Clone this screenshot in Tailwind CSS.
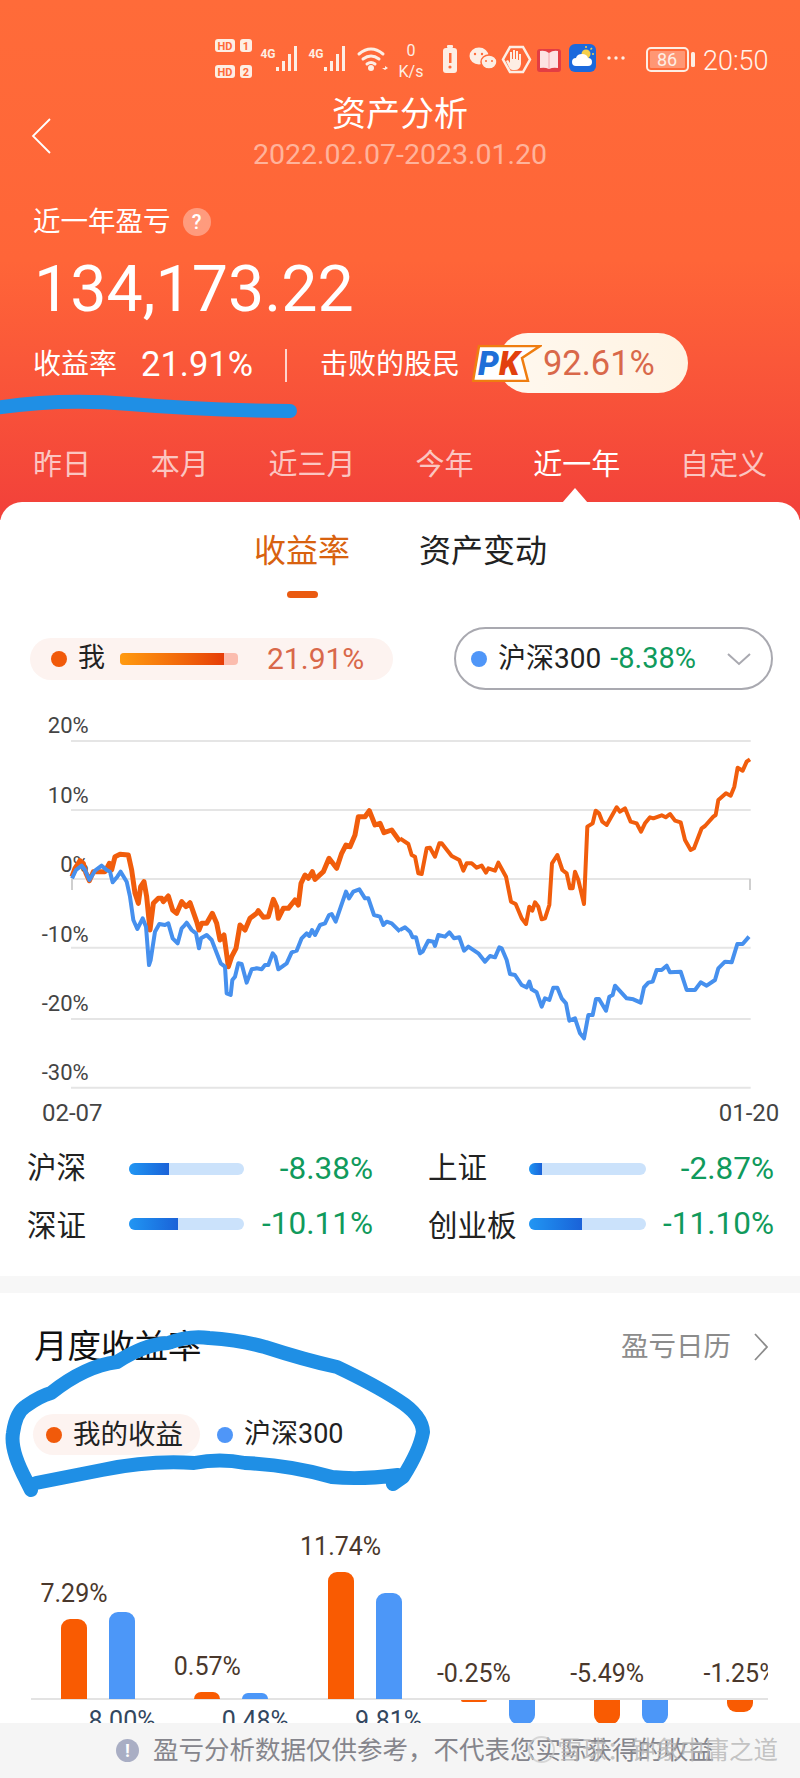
<!DOCTYPE html>
<html lang="zh-CN">
<head>
  <meta charset="UTF-8">
  <title>资产分析</title>
  <script src="https://cdn.jsdelivr.net/npm/@tailwindcss/browser@4"></script>
</head>
<body class="bg-white">
<div class="relative w-[800px] h-[1778px] overflow-hidden flex flex-col bg-white text-[#222] [font-family:Roboto,'Noto_Sans_CJK_SC',sans-serif]">

  <!-- header -->
  <div class="relative h-[520px] shrink-0 bg-linear-to-b from-[#ff6b39] via-[#ff6538] to-[#f2403a] text-white">
    <div class="flex pt-[36px] pl-[210px] h-[82px]">
      <svg class="w-[490px] h-[46px] shrink-0" viewBox="210 36 490 46">
        <g fill="#fdeee4" font-weight="700" text-anchor="middle">
          <rect x="215" y="39" width="20" height="13" rx="3"/><rect x="240" y="39" width="12" height="13" rx="3"/>
          <rect x="215" y="65" width="20" height="13" rx="3"/><rect x="240" y="65" width="12" height="13" rx="3"/>
          <text x="225" y="50" font-size="11" fill="#ff6b39">HD</text><text x="246" y="50" font-size="11" fill="#ff6b39">1</text>
          <text x="225" y="76" font-size="11" fill="#ff6b39">HD</text><text x="246" y="76" font-size="11" fill="#ff6b39">2</text>
          <text x="268" y="58" font-size="12">4G</text><text x="316" y="58" font-size="12">4G</text>
          <rect x="276" y="67" width="3" height="4"/><rect x="282" y="61" width="3" height="10"/><rect x="288" y="54" width="3" height="17"/><rect x="294" y="46" width="3" height="25"/>
          <rect x="324" y="67" width="3" height="4"/><rect x="330" y="61" width="3" height="10"/><rect x="336" y="54" width="3" height="17"/><rect x="342" y="46" width="3" height="25"/>
          <circle cx="371" cy="68" r="3"/>
          <path d="M359 54q12-10 24 0M363 59q8-6 16 0M367 64q4-3 8 0" fill="none" stroke="#fdeee4" stroke-width="3" stroke-linecap="round"/>
          <path d="M382 68h3l-0-2 3 2-3 2z"/>
        </g>
        <g fill="#fdeee4" text-anchor="middle">
          <text x="411" y="56" font-size="16">0</text>
          <text x="411" y="77" font-size="16">K/s</text>
          <rect x="447" y="45" width="6" height="3" rx="1"/>
          <rect x="443" y="48" width="14" height="25" rx="3"/>
          <rect x="449" y="53" width="2.5" height="10" fill="#ff6b39"/><circle cx="450" cy="67" r="1.6" fill="#ff6b39"/>
          <ellipse cx="479" cy="56" rx="9.5" ry="8.5"/>
          <ellipse cx="489" cy="62" rx="8" ry="7" stroke="#ff6b39" stroke-width="1.5"/>
          <circle cx="475" cy="54" r="1.2" fill="#ff6b39"/><circle cx="482" cy="54" r="1.2" fill="#ff6b39"/>
          <circle cx="486" cy="61" r="1" fill="#ff6b39"/><circle cx="492" cy="61" r="1" fill="#ff6b39"/>
          <path d="M510 47h13l7 12.500-7 12.500h-13l-7-12.500z" fill="none" stroke="#fdeee4" stroke-width="2.500"/>
          <path d="M510 52h2v7h1v-9h2v9h1v-8h2v9h1v-6h2v10q-1 6-6 6h-2q-3 0-4-3l-3-6 2-1 2 3z"/>
        </g>
        <rect x="537" y="49" width="24" height="23" rx="3" fill="#e33d43"/>
        <path d="M540 51q5-1 9 2 4-3 9-2v17q-5-1-9 1-4-2-9-1z" fill="#fde3e3"/>
        <path d="M549 53v16" stroke="#f4a6ad" stroke-width="1"/>
        <rect x="569" y="44" width="27" height="28" rx="6" fill="#1b69dd"/>
        <circle cx="586" cy="54" r="4.500" fill="#f4cf4a"/>
        <path d="M586 46v2M592 48l-1.500 1.500M594 54h-2" stroke="#f4cf4a" stroke-width="1.500"/>
        <path d="M576 66q-4 0-4-4t4-4q1-4 6-4t6 4q4 0 4 4t-4 4z" fill="#fff"/>
        <g fill="#fdeee4"><circle cx="609" cy="58" r="1.700"/><circle cx="616" cy="58" r="1.700"/><circle cx="623" cy="58" r="1.700"/></g>
        <rect x="647" y="48" width="41" height="23" rx="4" fill="none" stroke="#fdeee4" stroke-width="2"/>
        <rect x="650" y="51" width="35" height="17" rx="1" fill="#fff" fill-opacity=".3"/>
        <text x="667" y="66" font-size="18" text-anchor="middle" fill="#fdeee4">86</text>
        <rect x="691" y="52" width="4" height="15" rx="1.500" fill="#fdeee4"/>
      </svg>
      <span class="ml-[3px] text-[27px] leading-[46px] mt-[2px] text-[#fff3ea] font-light">20:50</span>
    </div>

    <div class="relative mt-[12px] text-center">
      <svg class="absolute left-[30px] top-[24px] w-[22px] h-[36px]" viewBox="0 0 22 36" fill="none" stroke="#fff" stroke-width="1.800"><path d="M20 1 3 18l17 17"/></svg>
      <h1 class="text-[34px] leading-[40px] font-normal">资产分析</h1>
      <p class="text-[28.500px] leading-[32px] mt-[5px] text-white/50">2022.02.07-2023.01.20</p>
    </div>

    <div class="flex items-center gap-[12px] pl-[33px] mt-[36px] h-[30px]">
      <span class="text-[27.500px] leading-[30px]">近一年盈亏</span>
      <span class="w-[28px] h-[28px] rounded-full bg-white/35 flex items-center justify-center text-[20px] font-medium">?</span>
    </div>

    <div class="pl-[34px] mt-[21px] text-[64.500px] leading-[62px]">134,173.22</div>

    <div class="flex items-center pl-[33px] h-[60px] mt-[13px]">
      <span class="mt-[4px] text-[28px]">收益率</span>
      <span class="mt-[4px] ml-[24px] text-[34.500px]">21.91%</span>
      <span class="mt-[4px] ml-[32px] w-[2px] h-[33px] bg-white/75"></span>
      <span class="mt-[4px] ml-[33px] text-[28px]">击败的股民</span>
      <span class="relative ml-[38px] w-[190px] h-[60px] rounded-full bg-linear-to-r from-[#fff8ef] to-[#fff3e2] flex items-center pl-[45px] pt-[2px] text-[34.500px] text-[#d9684a]">
        92.61%
        <svg class="absolute -left-[26px] top-[12px] w-[70px] h-[37px]" viewBox="0 0 70 37">
          <path d="M7 1h61L50 13l6 23H1z" fill="#fff" stroke="#ef7d10" stroke-width="2.500"/>
          <text x="6" y="30" font-size="33" font-weight="900" font-style="italic" fill="#1f6fd8">P</text>
          <text x="27" y="30" font-size="33" font-weight="900" font-style="italic" fill="#e2400e">K</text>
        </svg>
      </span>
    </div>

    <div class="flex justify-between px-[33px] mt-[54px] text-[29px] leading-[36px] text-white/70">
      <span>昨日</span><span>本月</span><span>近三月</span><span>今年</span><span class="text-white">近一年</span><span>自定义</span>
    </div>
    <div class="ml-[562px] mt-[5px] w-0 h-0 border-x-[13px] border-x-transparent border-b-[15px] border-b-white"></div>
  </div>

  <!-- white card -->
  <div class="relative -mt-[18px] flex-1 min-h-0 flex flex-col rounded-t-[22px] bg-white">
    <div class="flex pl-[254px] gap-[69px] pt-[29px] text-[32px] leading-[40px]">
      <span class="text-[#d8620f]">收益率</span><span class="text-[#222]">资产变动</span>
    </div>
    <div class="ml-[287px] mt-[20px] w-[31px] h-[7px] rounded-full bg-[#ea5a10]"></div>

    <div class="flex items-center justify-between pl-[30px] pr-[27px] mt-[29px] h-[63px]">
      <div class="flex items-center w-[363px] h-[42px] rounded-full bg-[#fdf3f0] pl-[21px]">
        <span class="w-[16px] h-[16px] rounded-full bg-[#f15a0a]"></span>
        <span class="ml-[11px] text-[27px]">我</span>
        <span class="ml-[15px] w-[118px] h-[12px] rounded-[4px] bg-[#fbbcae] overflow-hidden"><span class="block w-[104px] h-full bg-linear-to-r from-[#ff9a10] to-[#e63c08]"></span></span>
        <span class="ml-[29px] text-[30px] text-[#d9684a]">21.91%</span>
      </div>
      <div class="flex items-center w-[319px] h-[63px] rounded-full border-2 border-[#a9a9b0] pl-[15px]">
        <span class="w-[16px] h-[16px] rounded-full bg-[#4f96f8]"></span>
        <span class="ml-[11px] text-[28px]">沪深300</span>
        <span class="ml-[9px] text-[29px] text-[#109a5c]">-8.38%</span>
        <svg class="ml-[30px] w-[26px] h-[14px]" viewBox="0 0 26 14" fill="none" stroke="#a9a9b0" stroke-width="2"><path d="M2 2l11 10L24 2"/></svg>
      </div>
    </div>

    <!-- line chart: viewBox is 3 units per pixel -->
    <svg class="mt-[10px] w-[800px] h-[420px] shrink-0 overflow-visible" viewBox="0 0 2400 1260">
      <g stroke="#e5e5e5" stroke-width="6">
        <path d="M213 123H2252M213 330H2252M213 537H2252M213 743H2252M213 957H2252M213 1163H2252"/>
        <path d="M216 537v33M2250 537v33" stroke="#cfcfcf"/>
      </g>
      <g font-size="66" fill="#444" text-anchor="end">
        <text x="266" y="100">20%</text>
        <text x="266" y="308">10%</text>
        <text x="266" y="516">0%</text>
        <text x="266" y="725">-10%</text>
        <text x="266" y="933">-20%</text>
        <text x="266" y="1140">-30%</text>
      </g>
      <g font-size="72" fill="#444">
        <text x="126" y="1262">02-07</text>
        <text x="2156" y="1262">01-20</text>
      </g>
      <g fill="none" stroke="#f15d0c" stroke-linejoin="round">
        <path stroke-width="15" d="M216 530 225 505 240 482 250 490 258 520 268 542 280 515 300 515 315 515 328 490 335 510 345 470 360 463 385 465 395 510 405 580 415 610 422 560 432 545 440 590 450 690 460 610 475 595 485 595 490 605 505 588 518 630 530 640 545 605 558 620 570 608 590 665 597 690 605 670 620 670 637 640 650 670 660 720 672 705 685 800 695 770 708 745 720 675 735 690 750 655 770 640 775 632 790 652 805 650 820 598 830 620 835 655 850 625 865 625 885 600 895 615 903 550 915 525 925 535 937 515 945 538 970 515 987 475 1010 505 1025 460 1038 435 1050 440 1065 405 1075 350 1095 350 1108 332 1125 375 1140 370 1152 398 1175 390 1200 425"/>
        <path stroke-width="12" transform="translate(1200 0)" d="M0 415 25 432 35 465 45 470 55 520 65 522 80 445 90 443 105 470 118 430 125 430 145 455 155 468 178 480 190 512 200 490 215 490 230 503 245 497 258 518 265 505 285 512 295 488 318 530 333 605 347 612 365 655 378 672 388 620 397 632 405 607 415 620 425 658 435 655 448 615 456 490 472 465 487 510 500 520 510 565 518 565 525 515 535 540 552 612 562 380 578 370 587 332 597 340 607 365 620 375 650 322 660 335 675 325 692 365 710 370 723 395 735 370 750 352 760 355 785 346 797 352 810 342 825 362 842 367 855 420 872 450 882 445 905 385 915 378 940 350 947 345 955 300 978 280 992 287 1003 260 1013 203 1028 212 1040 185 1050 178"/>
      </g>
      <g fill="none" stroke="#4690ee" stroke-linejoin="round" stroke-width="12">
        <path d="M216 535 228 510 245 497 255 510 268 540 285 512 305 497 320 510 330 515 338 547 352 530 362 515 380 545 390 590 400 660 412 687 428 655 438 680 447 795 452 780 465 695 478 672 495 675 505 670 518 715 533 730 545 685 550 680 560 668 575 690 588 700 597 745 603 715 620 705 635 720 662 790 675 800 680 880 692 885 697 840 705 830 715 790 725 792 740 848 755 808 770 805 785 808 795 795 805 795 818 760 826 770 835 808 860 790 875 757 890 752 905 715 920 700 928 708 936 690 945 705 960 675 975 670 987 645 995 642 1007 665 1038 575 1047 595 1060 575 1078 568 1095 595 1105 595 1122 645 1140 650 1150 675 1160 665 1175 670 1200 695"/>
        <path transform="translate(1200 0)" d="M0 690 15 682 30 695 38 712 48 712 60 760 68 755 85 722 100 725 105 738 115 705 135 710 148 697 162 715 178 712 192 752 205 740 235 760 255 785 270 768 285 772 298 742 305 745 320 780 330 822 345 825 365 855 380 862 388 845 395 868 410 877 425 920 435 895 448 900 460 863 472 863 485 895 498 910 508 962 525 955 540 1000 552 1015 565 945 578 945 588 897 597 897 618 932 628 890 638 885 645 857 680 895 700 898 722 908 732 862 745 848 758 845 770 810 785 810 800 797 810 817 842 815 860 870 885 870 902 847 920 857 945 840 955 805 975 785 995 787 1012 732 1028 732 1047 710"/>
      </g>
    </svg>

    <!-- index comparison -->
    <div class="grid grid-cols-2 gap-x-[55px] pl-[27px] pr-[26px] mt-[21px] pb-[25px] text-[31.500px] leading-[55px]">
      <div class="flex items-center h-[55px]"><span class="w-[102px] text-[29.500px]">沪深</span><span class="w-[115px] h-[12px] rounded-full bg-[#cbe2fb] overflow-hidden"><span class="block w-[40px] h-full bg-linear-to-r from-[#2296f3] to-[#1b62d8]"></span></span><span class="flex-1 text-right text-[#109a5c]">-8.38%</span></div>
      <div class="flex items-center h-[55px]"><span class="w-[101px] text-[29.500px]">上证</span><span class="w-[117px] h-[12px] rounded-full bg-[#cbe2fb] overflow-hidden"><span class="block w-[13px] h-full bg-linear-to-r from-[#2296f3] to-[#1b62d8]"></span></span><span class="flex-1 text-right text-[#109a5c]">-2.87%</span></div>
      <div class="flex items-center h-[55px]"><span class="w-[102px] mt-[6px] text-[29.500px]">深证</span><span class="w-[115px] h-[12px] rounded-full bg-[#cbe2fb] overflow-hidden"><span class="block w-[49px] h-full bg-linear-to-r from-[#2296f3] to-[#1b62d8]"></span></span><span class="flex-1 text-right text-[#109a5c]">-10.11%</span></div>
      <div class="flex items-center h-[55px]"><span class="w-[101px] mt-[6px] text-[29.500px]">创业板</span><span class="w-[117px] h-[12px] rounded-full bg-[#cbe2fb] overflow-hidden"><span class="block w-[53px] h-full bg-linear-to-r from-[#2296f3] to-[#1b62d8]"></span></span><span class="flex-1 text-right text-[#109a5c]">-11.10%</span></div>
    </div>

    <div class="h-[17px] shrink-0 bg-[#f7f7f7]"></div>

    <!-- monthly returns -->
    <div class="flex items-center justify-between pl-[34px] pr-[32px] mt-[34px] h-[40px]">
      <h2 class="text-[33.500px] font-normal text-[#111]">月度收益率</h2>
      <div class="flex items-center gap-[23px] text-[27.500px] text-[#8c8c8c]">
        <span>盈亏日历</span>
        <svg class="w-[14px] h-[28px]" viewBox="0 0 14 28" fill="none" stroke="#8c8c8c" stroke-width="1.800"><path d="M1 1l12 13L1 27"/></svg>
      </div>
    </div>

    <div class="flex items-center pl-[33px] mt-[47px] h-[41px]">
      <div class="flex items-center w-[167px] h-[41px] rounded-full bg-[#fdf3f0] pl-[13px]">
        <span class="w-[16px] h-[16px] rounded-full bg-[#f15a0a]"></span>
        <span class="ml-[11px] text-[27.500px]">我的收益</span>
      </div>
      <span class="ml-[17px] w-[16px] h-[16px] rounded-full bg-[#4f96f8]"></span>
      <span class="ml-[11px] text-[27px]">沪深300</span>
    </div>

    <div class="relative flex-1 min-h-0 ml-[31px] w-[737px] mt-[75px] overflow-hidden">
      <div class="absolute left-0 right-0 top-[168px] h-[2px] bg-[#e3e3e3]"></div>
      <div id="bars" class="relative flex pl-[30px]"></div>
    </div>

    <!-- footer note -->
    <div class="relative h-[55px] shrink-0 bg-[#f5f5f5] flex items-center pl-[116px] text-[25.500px] text-[#85858c]">
      <span class="w-[23px] h-[23px] rounded-full bg-[#a9aec4] text-white flex items-center justify-center text-[18px] font-bold">!</span>
      <span class="ml-[14px] whitespace-nowrap">盈亏分析数据仅供参考，不代表您实际获得的收益</span>
      <span class="absolute left-[528px] top-[13px] w-[27px] h-[27px] rounded-full border-2 border-[#c9c9c9]/70"></span>
      <span class="absolute right-[22px] top-[10px] whitespace-nowrap text-[24.500px] text-[#b5b5b5]/80">雪球：钟象中庸之道</span>
    </div>
  </div>

  <!-- blue pen marks drawn on the screenshot -->
  <svg class="absolute left-0 top-0 w-[800px] h-[1778px] pointer-events-none" viewBox="0 0 800 1778" fill="none" stroke="#1f8fe5" stroke-linecap="round" stroke-linejoin="round">
    <path stroke-width="14" d="M-5 408Q60 398 130 404T290 411"/>
    <path stroke-width="14" d="M31 1490 26 1480Q10 1450 13 1433 16 1412 26 1406 40 1396 51 1393 85 1366 117 1362 145 1344 168 1343 190 1335 209 1338 240 1340 265 1347 305 1360 337 1367 375 1385 398 1400 422 1415 423 1432 420 1450 403 1477L393 1484 398 1475Q360 1480 332 1477 290 1465 245 1463 220 1458 194 1463 150 1460 102 1470L36 1483"/>
  </svg>
</div>

<script>
  // [orange %, orange height, blue %, blue height], heights in px from the zero line
  const months = [
    ['7.29%', 80, '8.00%', 87],
    ['0.57%', 7, '0.48%', 6],
    ['11.74%', 127, '9.81%', 106],
    ['-0.25%', -2, '', -24],
    ['-5.49%', -24, '', -24],
    ['-1.25%', -12, '', 0]
  ];

  function sub(color, text, textColor, h, labelOnTop) {
    const bar = h > 0
      ? `<div class="w-[26px] rounded-t-[9px] ${color}" style="height:${h}px"></div>`
      : `<div class="w-[26px] rounded-b-[9px] ${color}" style="height:${-h}px"></div>`;
    const label = text ? `<div class="whitespace-nowrap text-[25px] leading-[26px] ${textColor}">${text}</div>` : '';
    return `<div class="w-[26px] flex flex-col items-center">
      <div class="h-[169px] flex flex-col justify-end items-center">${labelOnTop ? `<div class="mb-[12px]">${label}</div>` : ''}${h > 0 ? bar : ''}</div>
      <div class="flex flex-col items-center mt-[1px]">${h < 0 ? bar : ''}${labelOnTop ? '' : `<div class="mt-[8px]">${label}</div>`}</div>
    </div>`;
  }

  document.getElementById('bars').innerHTML = months.map(m => `
    <div class="w-[133.300px] shrink-0 flex gap-[22px]">
      ${sub('bg-[#f95b02]', m[0], 'text-[#4a382c]', m[1], true)}
      ${sub('bg-[#4c97f8]', m[2], 'text-[#33475f]', m[3], false)}
    </div>`).join('');
</script>
</body>
</html>
